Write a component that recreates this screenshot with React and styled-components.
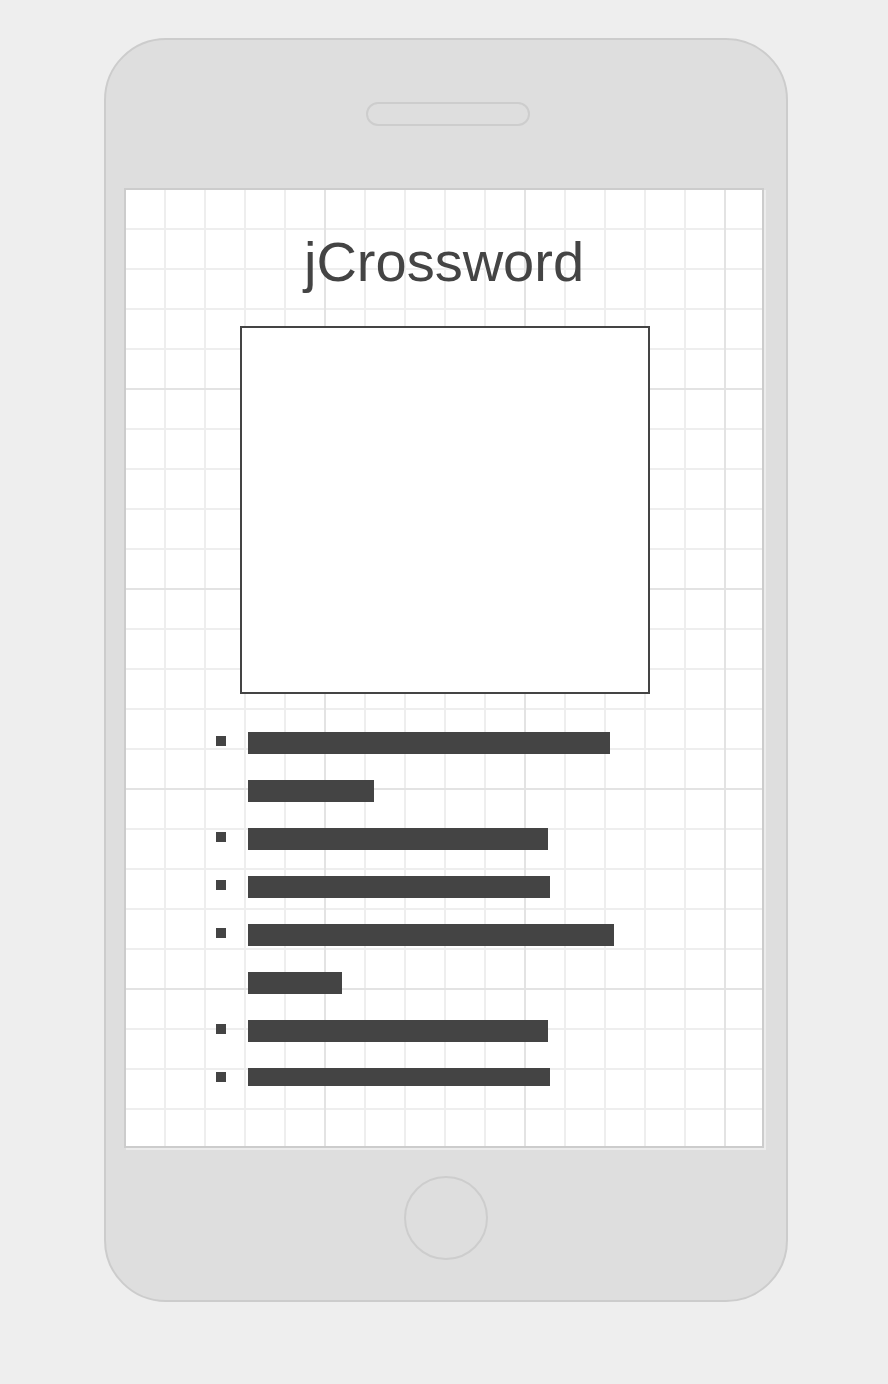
import React from "react";
import styled, { createGlobalStyle } from "styled-components";

const Global = createGlobalStyle`
  html, body { margin: 0; padding: 0; background: #eeeeee; }
  body { font-family: "Liberation Sans", Arial, sans-serif; }
`;

const Page = styled.div`
  width: 888px;
  min-height: 1384px;
  padding: 38px 0 0 104px;
  box-sizing: border-box;
`;

const Phone = styled.div`
  width: 684px;
  height: 1264px;
  box-sizing: border-box;
  background: #dedede;
  border: 2px solid #cccccc;
  border-radius: 62px;
  display: flex;
  flex-direction: column;
  align-items: flex-start;
  padding-top: 62px;
`;

const Speaker = styled.div`
  width: 164px;
  height: 24px;
  box-sizing: border-box;
  margin-left: 260px;
  border: 2px solid #cdcdcd;
  border-radius: 12px;
`;

const Screen = styled.div`
  margin: 62px 0 0 18px;
  width: 640px;
  height: 960px;
  box-sizing: border-box;
  border: 2px solid #cccccc;
  box-shadow: 2px 2px 0 #ececec;
  background-color: #ffffff;
  background-image:
    linear-gradient(to right, transparent 198px, #e3e3e3 198px),
    linear-gradient(to bottom, transparent 198px, #e3e3e3 198px),
    linear-gradient(to right, transparent 38px, #eeeeee 38px),
    linear-gradient(to bottom, transparent 38px, #eeeeee 38px);
  background-size: 200px 200px, 200px 200px, 40px 40px, 40px 40px;
  background-origin: padding-box;
  display: flex;
  flex-direction: column;
  align-items: flex-start;
`;

const Title = styled.h1`
  margin: 43px 0 0 0;
  align-self: stretch;
  text-align: center;
  font-family: "Liberation Sans", Arial, sans-serif;
  font-weight: 400;
  font-size: 56px;
  line-height: 57px;
  color: #444444;
`;

const Board = styled.div`
  margin: 36px 0 0 114px;
  width: 410px;
  height: 368px;
  box-sizing: border-box;
  border: 2px solid #444444;
  background: #ffffff;
`;

const List = styled.ul`
  list-style: none;
  margin: 38px 0 0 90px;
  padding: 0;
  display: flex;
  flex-direction: column;
  gap: 26px;
`;

const Item = styled.li`
  display: grid;
  grid-template-columns: 32px auto;
  align-items: start;
`;

const Bullet = styled.span`
  width: 10px;
  height: 10px;
  margin-top: 4px;
  background: #444444;
`;

const Lines = styled.div`
  display: flex;
  flex-direction: column;
  gap: 26px;
`;

const Bar = styled.span`
  display: block;
  width: ${(p) => p.$w}px;
  height: ${(p) => p.$h || 22}px;
  background: #444444;
`;

const HomeButton = styled.div`
  margin: 28px 0 0 298px;
  width: 84px;
  height: 84px;
  box-sizing: border-box;
  border: 2px solid #cdcdcd;
  border-radius: 50%;
`;

const items = [
  [[362], [126]],
  [[300]],
  [[302]],
  [[366], [94]],
  [[300]],
  [[302, 18]],
];

export default function App() {
  return (
    <>
      <Global />
      <Page>
        <Phone>
          <Speaker />
          <Screen>
            <Title>jCrossword</Title>
            <Board />
            <List>
              {items.map((lines, i) => (
                <Item key={i}>
                  <Bullet />
                  <Lines>
                    {lines.map(([w, h], j) => (
                      <Bar key={j} $w={w} $h={h} />
                    ))}
                  </Lines>
                </Item>
              ))}
            </List>
          </Screen>
          <HomeButton />
        </Phone>
      </Page>
    </>
  );
}
